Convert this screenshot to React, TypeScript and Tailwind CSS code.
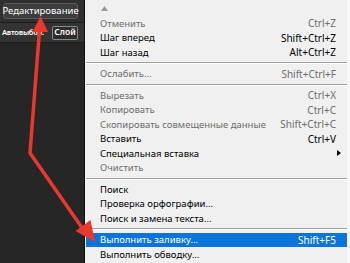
import React from "react";

type Item =
  | { sep: true }
  | { sep?: false; label: string; shortcut?: string; disabled?: boolean; sub?: boolean; active?: boolean };

const items: Item[] = [
  { label: "Отменить", shortcut: "Ctrl+Z", disabled: true },
  { label: "Шаг вперед", shortcut: "Shift+Ctrl+Z" },
  { label: "Шаг назад", shortcut: "Alt+Ctrl+Z" },
  { sep: true },
  { label: "Ослабить...", shortcut: "Shift+Ctrl+F", disabled: true },
  { sep: true },
  { label: "Вырезать", shortcut: "Ctrl+X", disabled: true },
  { label: "Копировать", shortcut: "Ctrl+C", disabled: true },
  { label: "Скопировать совмещенные данные", shortcut: "Shift+Ctrl+C", disabled: true },
  { label: "Вставить", shortcut: "Ctrl+V" },
  { label: "Специальная вставка", sub: true },
  { label: "Очистить", disabled: true },
  { sep: true },
  { label: "Поиск" },
  { label: "Проверка орфографии..." },
  { label: "Поиск и замена текста..." },
  { sep: true },
  { label: "Выполнить заливку...", shortcut: "Shift+F5", active: true },
  { label: "Выполнить обводку..." },
];

export default function App() {
  return (
    <div className="relative w-[350px] h-[263px] overflow-hidden flex font-['Noto_Sans',sans-serif]">
      {/* Dark Photoshop side */}
      <div className="w-[84px] bg-[#272727] flex flex-col">
        <div className="h-[22px] bg-[#2f2f2f] flex items-center pl-[3px]">
          <div className="h-[16px] w-[75px] flex items-center justify-center rounded-[3px] border border-[#5a5a5a] bg-[#3d3d3d] text-white text-[9.5px] leading-none whitespace-nowrap">
            Редактирование
          </div>
        </div>
        <div className="h-px bg-[#1b1b1b]" />
        <div className="h-[19px] bg-[#333333] flex items-center">
          <span className="flex-1 min-w-0 pl-[2px] text-white text-[7.5px] font-semibold leading-none whitespace-nowrap tracking-[-0.2px]">Автовыбор:</span>
          <div className="ml-[1px] mr-[6px] w-[26px] h-[14px] shrink-0 flex items-center justify-center rounded-[2px] border border-[#8a8a8a] bg-[#2c2c2c] text-white text-[8.5px] font-semibold leading-none">
            Слой
          </div>
        </div>
        <div className="h-px bg-[#1b1b1b]" />
        <div className="flex-1 bg-[#262626]" />
      </div>
      <div className="w-px bg-[#111111]" />
      {/* Menu */}
      <div className="flex-1 bg-[#f0f0f0] flex flex-col border-r-[3px] border-[#f7f7f7]">
        <div className="h-[16px] pl-[16px] flex items-center">
          <svg width="7" height="5" viewBox="0 0 7 5">
            <path d="M0 5 L3.5 0 L7 5 Z" fill="#9a9a9a" />
          </svg>
        </div>
        {items.map((it, i) =>
          it.sep ? (
            <div key={i} className="h-[7px] pl-px flex flex-col justify-center">
              <div className="h-px bg-[#a0a0a0]" />
              <div className="h-px bg-white" />
            </div>
          ) : (
            <div
              key={i}
              className={`h-[14.5px] ml-px flex items-center pl-[14px] pr-[11px] leading-none whitespace-nowrap ${
                it.active ? "bg-[#0a74da] text-white" : it.disabled ? "text-[#6d6d6d]" : "text-black"
              }`}
            >
              <span className="flex-1 text-[9.5px]">{it.label}</span>
              {it.shortcut && <span className="text-[10px]">{it.shortcut}</span>}
              {it.sub && (
                <svg width="4" height="6" viewBox="0 0 4 6" className="mr-[-5px]">
                  <path d="M0 0 L4 3 L0 6 Z" fill="#000" />
                </svg>
              )}
            </div>
          )
        )}
      </div>
      {/* Red annotation arrows */}
      <svg className="absolute inset-0 pointer-events-none" width="350" height="263" viewBox="0 0 350 263">
        <polyline points="39.5,30 30,153 85,232" fill="none" stroke="#e8392e" strokeWidth="3.5" strokeLinejoin="miter" />
        <polygon points="40.5,16 32.5,32 48,32" fill="#e8392e" />
        <polygon points="95,242 75.5,231 90.5,220" fill="#e8392e" />
      </svg>
    </div>
  );
}
